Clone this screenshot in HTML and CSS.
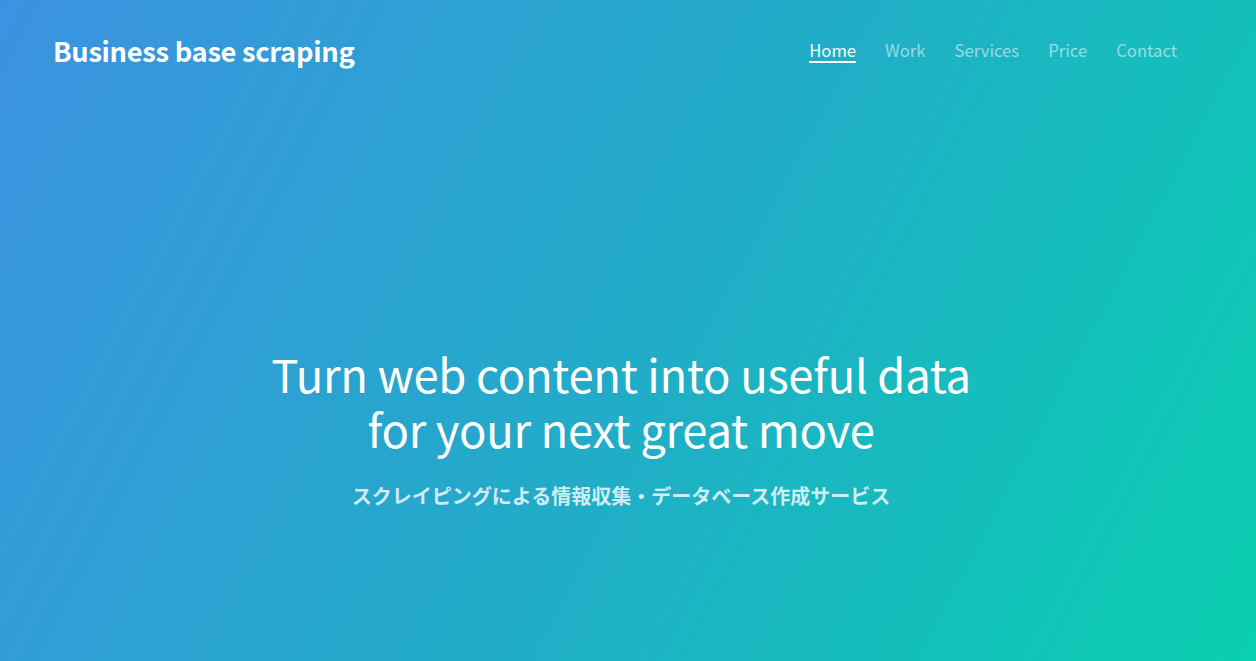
FILE: index.html
```html
<!DOCTYPE html>
<html lang="ja">
<head>
<meta charset="utf-8">
<title>Business base scraping</title>
<link rel="stylesheet" href="styles.css">
</head>
<body>
<div class="hero">
  <header class="header">
    <a class="logo" href="#">Business base scraping</a>
    <nav class="nav">
      <a class="nav-link active" href="#">Home</a>
      <a class="nav-link" href="#">Work</a>
      <a class="nav-link" href="#">Services</a>
      <a class="nav-link" href="#">Price</a>
      <a class="nav-link" href="#">Contact</a>
    </nav>
  </header>
  <main class="main">
    <h1 class="title">Turn web content into useful data<br>for your next great move</h1>
    <p class="subtitle">スクレイピングによる情報収集・データベース作成サービス</p>
  </main>
</div>
</body>
</html>
```
FILE: styles.css
```css
html, body {
  margin: 0;
  padding: 0;
  height: 100%;
}
body {
  font-family: "Noto Sans CJK JP", "Noto Sans", sans-serif;
  color: #fff;
}
.hero {
  height: 661px;
  background: linear-gradient(118deg, #3c92e1 0%, #22abc9 50%, #0acfb0 100%);
  display: flex;
  flex-direction: column;
}
.header {
  display: flex;
  justify-content: space-between;
  align-items: center;
  padding: 30px 79px 0 53px;
  height: 40px;
}
.logo {
  color: #fff;
  text-decoration: none;
  font-weight: 700;
  font-size: 27.3px;
  letter-spacing: -0.3px;
}
.nav {
  display: flex;
  gap: 29px;
}
.nav-link {
  color: rgba(255, 255, 255, 0.55);
  text-decoration: none;
  font-size: 16.7px;
}
.nav-link.active {
  color: #fff;
  text-decoration: underline;
  text-underline-offset: 4px;
  text-decoration-thickness: 2px;
}
.main {
  flex: 1;
  display: flex;
  flex-direction: column;
  align-items: center;
  text-align: center;
  padding: 276px 14px 0 0;
}
.title {
  margin: 0;
  font-weight: 400;
  font-size: 45.4px;
  line-height: 55px;
  letter-spacing: -0.3px;
}
.subtitle {
  margin: 25px 0 0;
  font-size: 20px;
  font-weight: 700;
  color: rgba(255, 255, 255, 0.8);
}
```
